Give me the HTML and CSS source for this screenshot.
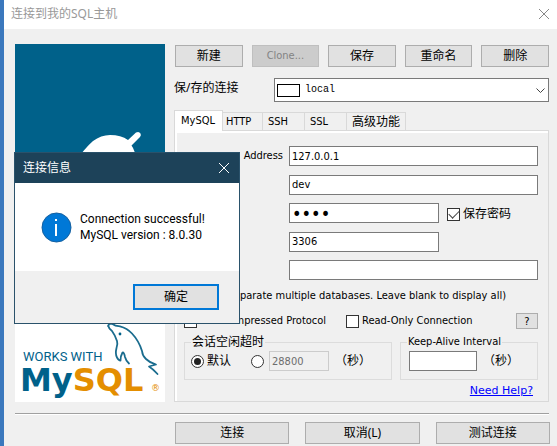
FILE: index.html
```html
<!DOCTYPE html>
<html lang="zh-CN">
<head>
<meta charset="utf-8">
<title>连接到我的SQL主机</title>
<link rel="stylesheet" href="styles.css">
</head>
<body>
<div class="window">
  <header class="titlebar">
    <h1 class="title">连接到我的SQL主机</h1>
    <button class="close" type="button" aria-label="关闭">
      <svg width="12" height="12" viewBox="0 0 12 12"><path d="M1 1 11 11M11 1 1 11"/></svg>
    </button>
  </header>
  <main class="content">
    <svg class="banner" viewBox="0 0 150 358" role="img" aria-label="Works with MySQL">
      <rect width="150" height="358" fill="#fff"/>
      <rect width="150" height="200" fill="#00618a"/>
      <path d="M60 118 Q70 104 78 97 Q86 91 95 91 Q106 91 113 96 L121 88.500 Q124 87 125.500 89.500 Q126.500 91 125 93 L116.500 101.500 Q120 106 122 118Z" fill="#fff"/>
      <g fill="none" stroke="#1a6c8e" stroke-width="1.800" stroke-linecap="round" stroke-linejoin="round">
        <path d="M93.300 282 Q93.500 279.500 97 279.700 Q100 282 105 282.300 Q112 284 117 289.500 Q124 297 127 307 Q127.500 312 131 315 Q135 319 141 320.500 L134 322.500 Q138 325 142.500 330"/>
        <path d="M93.300 282 Q94 285 97 287 Q100 291 102 297 Q103 300 101.500 304 Q100 310 102 313.500 Q103.500 316.500 105.500 316.500 Q105.500 312 107.500 308.500 Q109 308 110 313 Q111 317 114 319.500"/>
      </g>
      <circle cx="105" cy="290" r="1.400" fill="#00618a"/>
      <text class="banner-small" x="8" y="317">WORKS WITH</text>
      <text class="banner-large" x="5" y="347"><tspan class="blue">My</tspan><tspan class="orange">SQL</tspan></text>
      <text class="banner-mark" x="136" y="347">®</text>
    </svg>
    <section class="main">
      <div class="toolbar">
        <button class="btn" type="button">新建</button>
        <button class="btn latin" type="button" disabled>Clone...</button>
        <button class="btn" type="button">保存</button>
        <button class="btn" type="button">重命名</button>
        <button class="btn" type="button">删除</button>
      </div>
      <div class="saved">
        <label class="cjk" for="saved">保/存的连接</label>
        <div class="combo">
          <select id="saved"><option>local</option></select>
          <span class="swatch"></span>
          <svg class="chevron" width="9" height="6" viewBox="0 0 9 6"><path d="M.5.5 4.500 4.500 8.500.5"/></svg>
        </div>
      </div>
      <div class="tabs" role="tablist">
        <button class="tab active" type="button" role="tab" aria-selected="true">MySQL</button>
        <button class="tab" type="button" role="tab">HTTP</button>
        <button class="tab" type="button" role="tab">SSH</button>
        <button class="tab" type="button" role="tab">SSL</button>
        <button class="tab cjk" type="button" role="tab">高级功能</button>
      </div>
      <div class="panel">
        <div class="fields">
          <label class="host" for="host">Address</label><input id="host" class="wide" type="text" value="127.0.0.1">
          <input class="wide" type="text" value="dev" aria-label="Username">
          <input class="first" type="password" value="abcd" aria-label="Password">
          <label class="check cjk"><input type="checkbox" checked>保存密码</label>
          <input class="first" type="text" value="3306" aria-label="Port">
          <input class="wide" type="text" aria-label="Databases">
        </div>
        <p class="hint">separate multiple databases. Leave blank to display all)</p>
        <div class="options">
          <label class="check"><input type="checkbox">Use Compressed Protocol</label>
          <label class="check"><input type="checkbox">Read-Only Connection</label>
          <button class="btn latin help" type="button">?</button>
        </div>
        <div class="groups">
          <fieldset>
            <legend class="cjk">会话空闲超时</legend>
            <div class="line">
              <label class="check cjk default"><input type="radio" name="idle" checked>默认</label>
              <input type="radio" name="idle" aria-label="自定义">
              <input class="idle" type="text" value="28800" disabled aria-label="会话空闲超时">
              <span class="cjk">（秒）</span>
            </div>
          </fieldset>
          <fieldset>
            <legend>Keep-Alive Interval</legend>
            <div class="line">
              <input class="alive" type="text" aria-label="Keep-Alive Interval">
              <span class="cjk">（秒）</span>
            </div>
          </fieldset>
        </div>
        <a class="link" href="#">Need Help?</a>
      </div>
    </section>
  </main>
  <footer class="actions">
    <button class="btn" type="button">连接</button>
    <button class="btn" type="button">取消(L)</button>
    <button class="btn" type="button">测试连接</button>
  </footer>
</div>
<div class="dialog" role="dialog" aria-labelledby="dialog-title">
  <div class="dialog-bar">
    <h2 class="dialog-title" id="dialog-title">连接信息</h2>
    <button class="close light" type="button" aria-label="关闭">
      <svg width="12" height="12" viewBox="0 0 12 12"><path d="M1 1 11 11M11 1 1 11"/></svg>
    </button>
  </div>
  <div class="dialog-body">
    <svg width="31" height="31" viewBox="0 0 31 31"><circle cx="15.500" cy="15.500" r="14.500" fill="#0078d7" stroke="#1560a0"/><path d="M14 12h2V24h-2zM14 7h2v2h-2z" fill="#fff"/></svg>
    <p>Connection successful!<br>MySQL version : 8.0.30</p>
  </div>
  <div class="dialog-foot"><button class="btn ok" type="button">确定</button></div>
</div>
</body>
</html>
```
FILE: styles.css
```css
* { box-sizing: border-box; }
body {
  margin: 0;
  background: #f0f0f0;
  color: #000;
  font: 11px/16px "DejaVu Sans Condensed", "Noto Sans CJK SC", sans-serif;
}
h1, h2, p { margin: 0; font-weight: normal; }
button, input, select { font: inherit; color: inherit; margin: 0; }
.cjk, .btn, .title, .dialog-title { font: 12px/16px "Noto Sans", "Noto Sans CJK SC", sans-serif; }
.window { min-height: 100vh; border-left: 4px solid #3b78bd; }
.titlebar {
  display: flex;
  align-items: center;
  justify-content: space-between;
  height: 29px;
  padding: 0 7px 2px;
  background: #fff;
}
.title { color: #999; }
.close { display: flex; padding: 0; border: 0; background: none; }
.close path { fill: none; stroke: #888; }
.light path { stroke: #fff; }
.content {
  display: grid;
  grid-template-columns: 150px 1fr;
  gap: 9px;
  margin: 0 8px 0 11px;
  padding: 15px 0 11px;
  border-bottom: 1px solid #a0a0a0;
  box-shadow: 0 1px #fff;
}
.banner { width: 150px; height: 358px; }
.banner-small { font: 13px Roboto, sans-serif; fill: #00618a; }
.banner-large { font: bold 32px "DejaVu Sans", sans-serif; }
.banner-mark { font: 9px "DejaVu Sans", sans-serif; fill: #e48e00; }
.blue { fill: #00618a; }
.orange { fill: #e48e00; }
.main { display: flex; flex-direction: column; }
.toolbar { display: grid; grid-template-columns: repeat(5, 1fr); gap: 9px; padding: 1px 0 0 1px; }
.btn { height: 22px; padding: 0; border: 1px solid #adadad; background: #e1e1e1; }
.btn:disabled { color: #838383; background: #ccc; border-color: #bfbfbf; }
.btn.latin { font: 11px/16px "DejaVu Sans Condensed", sans-serif; }
.saved { display: flex; justify-content: space-between; margin-top: 11px; }
.saved label { padding-top: 2px; }
.combo { position: relative; width: 275px; height: 24px; }
.combo select {
  appearance: none;
  width: 100%;
  height: 24px;
  padding: 0 20px 0 30px;
  border: 1px solid #7a7a7a;
  border-radius: 0;
  background: #fff;
  font: 10px/20px "Liberation Mono", monospace;
}
.swatch { position: absolute; left: 3px; top: 6px; width: 23px; height: 13px; border: 1px solid #000; }
.chevron { position: absolute; right: 4px; top: 10px; fill: none; stroke: #444; }
.tabs { display: flex; align-items: flex-end; height: 28px; }
.tab { width: 42px; height: 18px; padding: 1px 0 0 5px; border: 1px solid #d9d9d9; border-width: 1px 1px 0 0; background: #f0f0f0; text-align: left; }
.tab.active { width: 49px; height: 21px; margin-bottom: -1px; padding: 0 0 1px 6px; border-left-width: 1px; background: #fff; z-index: 1; }
.tab.active + .tab { width: 40px; padding-left: 3px; }
.tab.cjk { width: 59px; }
.panel { flex: 1; padding: 15px 10px 0 9px; border: 1px solid #d9d9d9; box-shadow: inset 2px 2px #fff; }
.fields {
  display: grid;
  grid-template-columns: 105px 150px 1fr;
  align-content: space-between;
  height: 134px;
}
.host { padding: 2px 6px 0 0; text-align: right; }
.fields .wide { grid-column: 2 / 4; }
.fields .first { grid-column: 2; }
input[type="text"], input[type="password"] {
  width: 100%;
  height: 20px;
  padding: 0 2px;
  border: 1px solid #7a7a7a;
  background: #fff;
}
.fields input[type="password"] { font: 18px/16px "DejaVu Sans Condensed", sans-serif; }
.check { display: flex; align-items: center; gap: 3px; }
.fields .check { padding: 2px 0 0 8px; }
input[type="checkbox"], input[type="radio"] {
  appearance: none;
  display: grid;
  place-items: center;
  width: 13px;
  height: 13px;
  border: 1px solid #333;
  background: #fff;
}
input[type="checkbox"]:checked::before {
  content: "";
  width: 9px;
  height: 5px;
  border: solid #444;
  border-width: 0 0 1px 1px;
  transform: translateY(-1px) rotate(-45deg);
}
input[type="radio"] { border-radius: 50%; }
input[type="radio"]:checked::before { content: ""; width: 7px; height: 7px; border-radius: 50%; background: #222; }
.hint { margin-top: 8px; padding-right: 32px; text-align: right; white-space: nowrap; }
.options { display: grid; grid-template-columns: 162px 1fr 22px; align-items: center; margin-top: 9px; height: 16px; }
.help { width: 22px; height: 16px; }
.groups { display: grid; grid-template-columns: 208px 138px; justify-content: space-between; margin-top: 5px; }
fieldset { min-width: 0; height: 46px; margin: 0; padding: 1px 6px 0; border: 1px solid #dcdcdc; }
legend { padding: 0 1px; line-height: 16px; }
.line { display: flex; align-items: center; height: 20px; }
.default { width: 60px; }
.line .idle { width: 60px; margin: 0 6px 0 5px; border-color: #ccc; background: #f0f0f0; color: #6d6d6d; }
.line .alive { width: 68px; margin: 0 6px 0 2px; }
.link { display: block; margin: 3px 5px 0 0; text-align: right; color: #00f; font: 11px/16px "DejaVu Sans", sans-serif; }
.actions { display: grid; grid-template-columns: repeat(3, 1fr); gap: 16px; margin: 8px 7px 0 171px; }
.dialog { position: absolute; left: 14px; top: 152px; width: 226px; border: 1px solid #2a526b; background: #fff; }
.dialog-bar { display: flex; align-items: center; justify-content: space-between; height: 30px; padding: 0 9px 0 8px; background: #1d4259; color: #fff; }
.dialog-body { display: flex; align-items: center; gap: 8px; height: 88px; padding: 0 26px; font: 12px/16px Roboto, "Noto Sans", sans-serif; }
.dialog-foot { display: flex; align-items: center; justify-content: flex-end; height: 52px; padding-right: 20px; background: #f0f0f0; }
.ok { width: 86px; height: 26px; border: 2px solid #0078d7; }
```
